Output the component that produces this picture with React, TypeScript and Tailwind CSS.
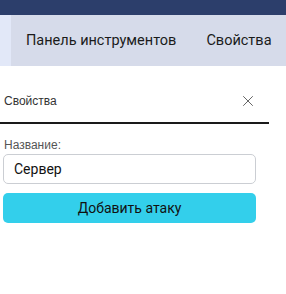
import { X } from 'lucide-react';

const TABS = ['Панель инструментов', 'Свойства'];

export default function App() {
  return (
    <div className="w-[286px] h-[294px] bg-white overflow-hidden">
      {/* верхняя полоса */}
      <div className="h-[15px] bg-[#2c3e6b]" />

      {/* вкладки */}
      <div className="h-[51px] flex bg-[#d6dbea] font-['Roboto',sans-serif] overflow-hidden">
        <div className="w-[11px] shrink-0 bg-[#e2e8f8]" />
        {TABS.map((tab) => (
          <div
            key={tab}
            className="shrink-0 px-[15px] flex items-center text-[14.5px] text-[#1b1b1b] whitespace-nowrap first:pl-[17px]"
          >
            {tab}
          </div>
        ))}
      </div>

      {/* панель свойств */}
      <div className="w-[269px]">
        <div className="flex items-center justify-between pl-[4px] pr-[12px] pt-[28px] pb-[14px] border-b-2 border-[#1a1a1a]">
          <span className="text-[12px] leading-[14px] text-[#333] font-['Liberation_Sans',sans-serif]">
            Свойства
          </span>
          <X className="w-[18px] h-[18px] -my-[2px] text-[#555]" strokeWidth={1.2} />
        </div>

        <div className="px-[3px] pt-[14px]">
          <label className="block text-[12px] leading-[14px] text-[#555] font-['Liberation_Sans',sans-serif] mb-[2px] pl-[1px]">
            Название:
          </label>
          <input
            value="Сервер"
            readOnly
            className="w-[253px] h-[30px] px-[10px] border border-[#cbced3] rounded-[5px] text-[14px] text-[#111] font-['Roboto',sans-serif] outline-none"
          />
          <button
            type="button"
            className="mt-[9px] w-[253px] h-[30px] rounded-[5px] bg-[#33cfeb] text-[14px] text-[#111] font-['Roboto',sans-serif]"
          >
            Добавить атаку
          </button>
        </div>
      </div>
    </div>
  );
}
